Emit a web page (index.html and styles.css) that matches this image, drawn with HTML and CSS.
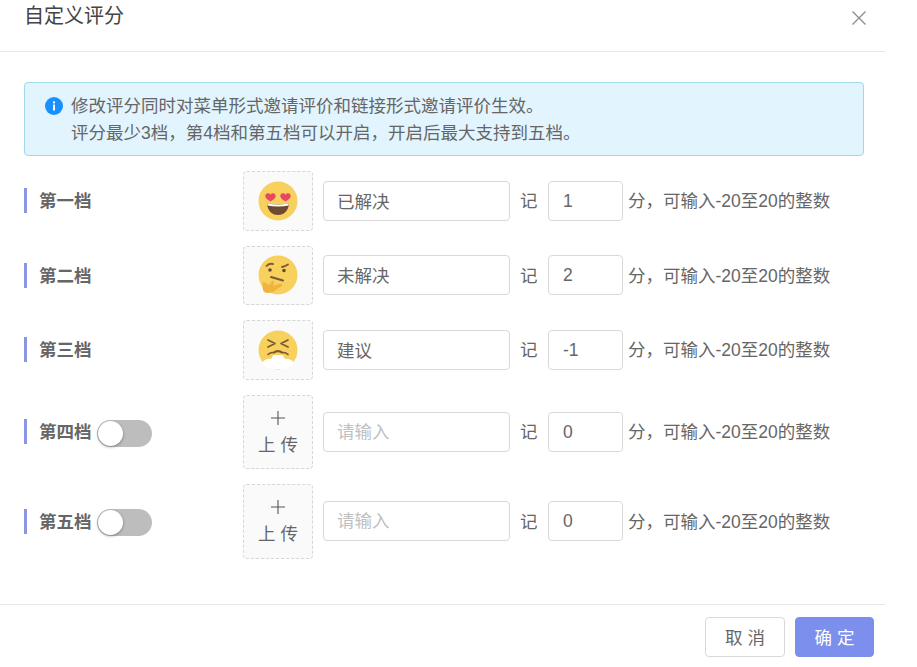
FILE: index.html
```html
<!DOCTYPE html>
<html lang="zh-CN">
<head>
<meta charset="utf-8">
<title>自定义评分</title>
<link rel="stylesheet" href="styles.css">
</head>
<body>
<div class="dialog">
  <header class="header">
    <h1 class="title">自定义评分</h1>
    <svg class="close" viewBox="0 0 14 14" width="14" height="14"><path d="M.5.5l13 13M13.5.5l-13 13" fill="none" stroke="#8c8c8c" stroke-width="1.3"/></svg>
  </header>
  <main class="body">
    <div class="alert">
      <svg class="alert-icon" viewBox="0 0 18 18" width="18" height="18"><circle cx="9" cy="9" r="9" fill="#1890ff"/><rect x="8" y="7.6" width="2" height="6" rx=".4" fill="#fff"/><circle cx="9" cy="5.4" r="1.15" fill="#fff"/></svg>
      <div>
        <p class="alert-line">修改评分同时对菜单形式邀请评价和链接形式邀请评价生效。</p>
        <p class="alert-line">评分最少3档，第4档和第五档可以开启，开启后最大支持到五档。</p>
      </div>
    </div>
    <div class="rows">
      <div class="row">
        <div class="label"><span class="label-text">第一档</span></div>
        <div class="upload">
          <svg class="emoji" viewBox="0 0 40 40" width="40" height="40">
            <circle cx="20" cy="20" r="19.5" fill="#f8d05e"/>
            <path d="M9 22.500c7 1.500 15 1.500 22 0-.4 7-5 11.500-11 11.500S9.400 29.500 9 22.500z" fill="#6e4a32"/>
            <path d="M9.200 22.500c7 1.500 14.600 1.500 21.600 0l-.3 2c-6.500 1.300-14.500 1.300-21 0z" fill="#fff"/>
            <path d="M12.500 20.500c-1.700-1.400-5.200-2.900-5.200-5.600 0-2.700 3.600-3.500 5.200-1.200 1.600-2.300 5.200-1.500 5.200 1.200 0 2.700-3.500 4.200-5.200 5.600z" fill="#e8485f"/>
            <path d="M27.500 20.500c-1.700-1.400-5.200-2.900-5.200-5.600 0-2.700 3.600-3.500 5.200-1.200 1.600-2.300 5.200-1.500 5.200 1.200 0 2.700-3.500 4.200-5.200 5.600z" fill="#e8485f"/>
          </svg>
        </div>
        <div class="text-input">已解决</div>
        <span class="note">记</span>
        <div class="num-input">1</div>
        <span class="hint">分，可输入-20至20的整数</span>
      </div>
      <div class="row">
        <div class="label"><span class="label-text">第二档</span></div>
        <div class="upload">
          <svg class="emoji" viewBox="0 0 40 40" width="40" height="40">
            <circle cx="20" cy="20" r="19.5" fill="#f8d05e"/>
            <path d="M8.500 11c1.500-2 4-2.600 6.500-2" fill="none" stroke="#7a5a30" stroke-width="1.800" stroke-linecap="round"/>
            <path d="M24 12c2-.4 4-1.300 6-2.500" fill="none" stroke="#7a5a30" stroke-width="1.800" stroke-linecap="round"/>
            <circle cx="12" cy="15" r="1.800" fill="#6b4a2c"/>
            <circle cx="26" cy="15.500" r="1.800" fill="#6b4a2c"/>
            <path d="M13 22l12 3.500" fill="none" stroke="#7a5a30" stroke-width="2" stroke-linecap="round"/>
            <path d="M5 27c-.8 4-.4 8 1 10 3 1.800 8 .8 10.500-1 2.500-1.600 3.500-2.600 6.500-4.500 2-1 1.500-3-.5-2.800-3 .3-5 1.800-7.500 1.800 1-1.800 1.400-3.400.5-4.200-1.200-.8-2 .2-3 2-1 1.700-2 2-3.500.5C7.500 28 6.500 26.500 5 27z" fill="#f0b43c"/>
          </svg>
        </div>
        <div class="text-input">未解决</div>
        <span class="note">记</span>
        <div class="num-input">2</div>
        <span class="hint">分，可输入-20至20的整数</span>
      </div>
      <div class="row">
        <div class="label"><span class="label-text">第三档</span></div>
        <div class="upload">
          <svg class="emoji" viewBox="0 0 40 40" width="40" height="40">
            <circle cx="20" cy="20" r="19.500" fill="#f8d05e"/>
            <path d="M10 10l7 3.500-7 3.500M30 10l-7 3.500 7 3.500" fill="none" stroke="#7a5a30" stroke-width="1.700" stroke-linecap="round" stroke-linejoin="round"/>
            <path d="M10 24.500c1.500-1.500 3-2 5-2M30 24.500c-1.500-1.500-3-2-5-2" fill="none" stroke="#7a5a30" stroke-width="1.700" stroke-linecap="round"/>
            <path d="M16 22.500c2-1.800 6-1.800 8 0" fill="none" stroke="#7a5a30" stroke-width="2.200" stroke-linecap="round"/>
            <path d="M15.500 25h9l2.500 4c3-.6 7 .6 8.500 3.500.6 1.500-.5 3-2 3.500-3 1.500-5 2.500-7.500 3h-12c-2.500-.5-4.500-1.500-7.500-3-1.500-.5-2.600-2-2-3.500C6 29.600 10 28.400 13 29z" fill="#fff"/>
          </svg>
        </div>
        <div class="text-input">建议</div>
        <span class="note">记</span>
        <div class="num-input">-1</div>
        <span class="hint">分，可输入-20至20的整数</span>
      </div>
      <div class="row">
        <div class="label"><span class="label-text">第四档</span><span class="switch"><span class="knob"></span></span></div>
        <div class="upload upload-tall">
          <svg class="plus" viewBox="0 0 14 14" width="14" height="14"><path d="M7 0v14M0 7h14" stroke="#555" stroke-width="1.100" fill="none"/></svg>
          <span class="upload-text">上 传</span>
        </div>
        <div class="text-input placeholder">请输入</div>
        <span class="note">记</span>
        <div class="num-input">0</div>
        <span class="hint">分，可输入-20至20的整数</span>
      </div>
      <div class="row">
        <div class="label"><span class="label-text">第五档</span><span class="switch"><span class="knob"></span></span></div>
        <div class="upload upload-tall">
          <svg class="plus" viewBox="0 0 14 14" width="14" height="14"><path d="M7 0v14M0 7h14" stroke="#555" stroke-width="1.100" fill="none"/></svg>
          <span class="upload-text">上 传</span>
        </div>
        <div class="text-input placeholder">请输入</div>
        <span class="note">记</span>
        <div class="num-input">0</div>
        <span class="hint">分，可输入-20至20的整数</span>
      </div>
    </div>
  </main>
  <footer class="footer">
    <button class="btn">取 消</button>
    <button class="btn btn-primary">确 定</button>
  </footer>
</div>
</body>
</html>
```
FILE: styles.css
```css
* { box-sizing: border-box; }
html, body { margin: 0; padding: 0; background: #fff; }
body {
  font-family: "Liberation Sans", "Noto Sans CJK SC", sans-serif;
  font-size: 17.5px;
  color: #666;
  overflow: hidden;
}
.dialog {
  width: 885px;
  height: 667px;
  display: flex;
  flex-direction: column;
}
.header {
  height: 52px;
  flex: none;
  border-bottom: 1px solid #e8e8e8;
  padding: 4px 19px 0 24px;
  display: flex;
  justify-content: space-between;
  align-items: flex-start;
}
.title {
  margin: 0;
  font-size: 20px;
  font-weight: 400;
  line-height: 24px;
  color: #444;
}
.close { margin-top: 7px; }
.body {
  flex: 1;
  padding: 30px 21px 0 24px;
}
.alert {
  height: 74px;
  background: #e2f5fe;
  border: 1px solid #a3d8ea;
  border-radius: 4px;
  padding: 10px 20px;
  display: flex;
  gap: 8px;
}
.alert-icon { flex: none; margin-top: 4px; }
.alert-line {
  margin: 0;
  line-height: 27px;
  color: #666;
}
.rows {
  margin-top: 15px;
  display: flex;
  flex-direction: column;
  gap: 15px;
}
.row {
  display: flex;
  align-items: center;
}
.label {
  width: 219px;
  flex: none;
  display: flex;
  align-items: center;
}
.label-text {
  border-left: 3px solid #8b96e0;
  padding-left: 12px;
  height: 25px;
  line-height: 27px;
  font-weight: 700;
  color: #666;
}
.switch {
  width: 55px;
  height: 27px;
  margin-left: 5px;
  margin-top: 3px;
  border-radius: 14px;
  background: #bdbdbd;
  display: flex;
  align-items: center;
  padding-left: 1px;
}
.knob {
  width: 25px;
  height: 25px;
  border-radius: 50%;
  background: #fff;
  box-shadow: 0 1px 3px rgba(0, 0, 0, .35);
}
.upload {
  width: 70px;
  height: 59.600px;
  flex: none;
  border: 1px dashed #d6d6d6;
  border-radius: 4px;
  background: #fafafa;
  display: flex;
  flex-direction: column;
  align-items: center;
  justify-content: center;
}
.upload-tall {
  height: 74.400px;
  padding-top: 4px;
  color: #666;
}
.emoji { display: block; }
.plus { display: block; margin-bottom: 8px; }
.upload-text { line-height: 24px; }
.text-input,
.num-input {
  height: 40px;
  flex: none;
  border: 1px solid #d9d9d9;
  border-radius: 4px;
  background: #fff;
  color: #666;
}
.text-input {
  width: 187px;
  margin-left: 10px;
  padding-left: 13px;
  line-height: 40px;
}
.text-input.placeholder {
  color: #bfbfbf;
  line-height: 38px;
}
.num-input {
  width: 75px;
  padding-left: 14px;
  line-height: 38px;
}
.note {
  width: 18px;
  margin: 0 10px 2px;
  flex: none;
}
.hint { margin: 0 0 2px 5px; white-space: nowrap; }
.footer {
  height: 63px;
  flex: none;
  border-top: 1px solid #e8e8e8;
  padding: 12px 11px 0 0;
  display: flex;
  justify-content: flex-end;
  align-items: flex-start;
  gap: 10px;
}
.btn {
  width: 80px;
  height: 40px;
  border: 1px solid #d9d9d9;
  border-radius: 4px;
  background: #fff;
  color: #666;
  font: inherit;
  padding: 0 0 2px;
}
.btn-primary {
  width: 79px;
  border-color: #7d8fec;
  background: #7d8fec;
  color: #fff;
}
```
